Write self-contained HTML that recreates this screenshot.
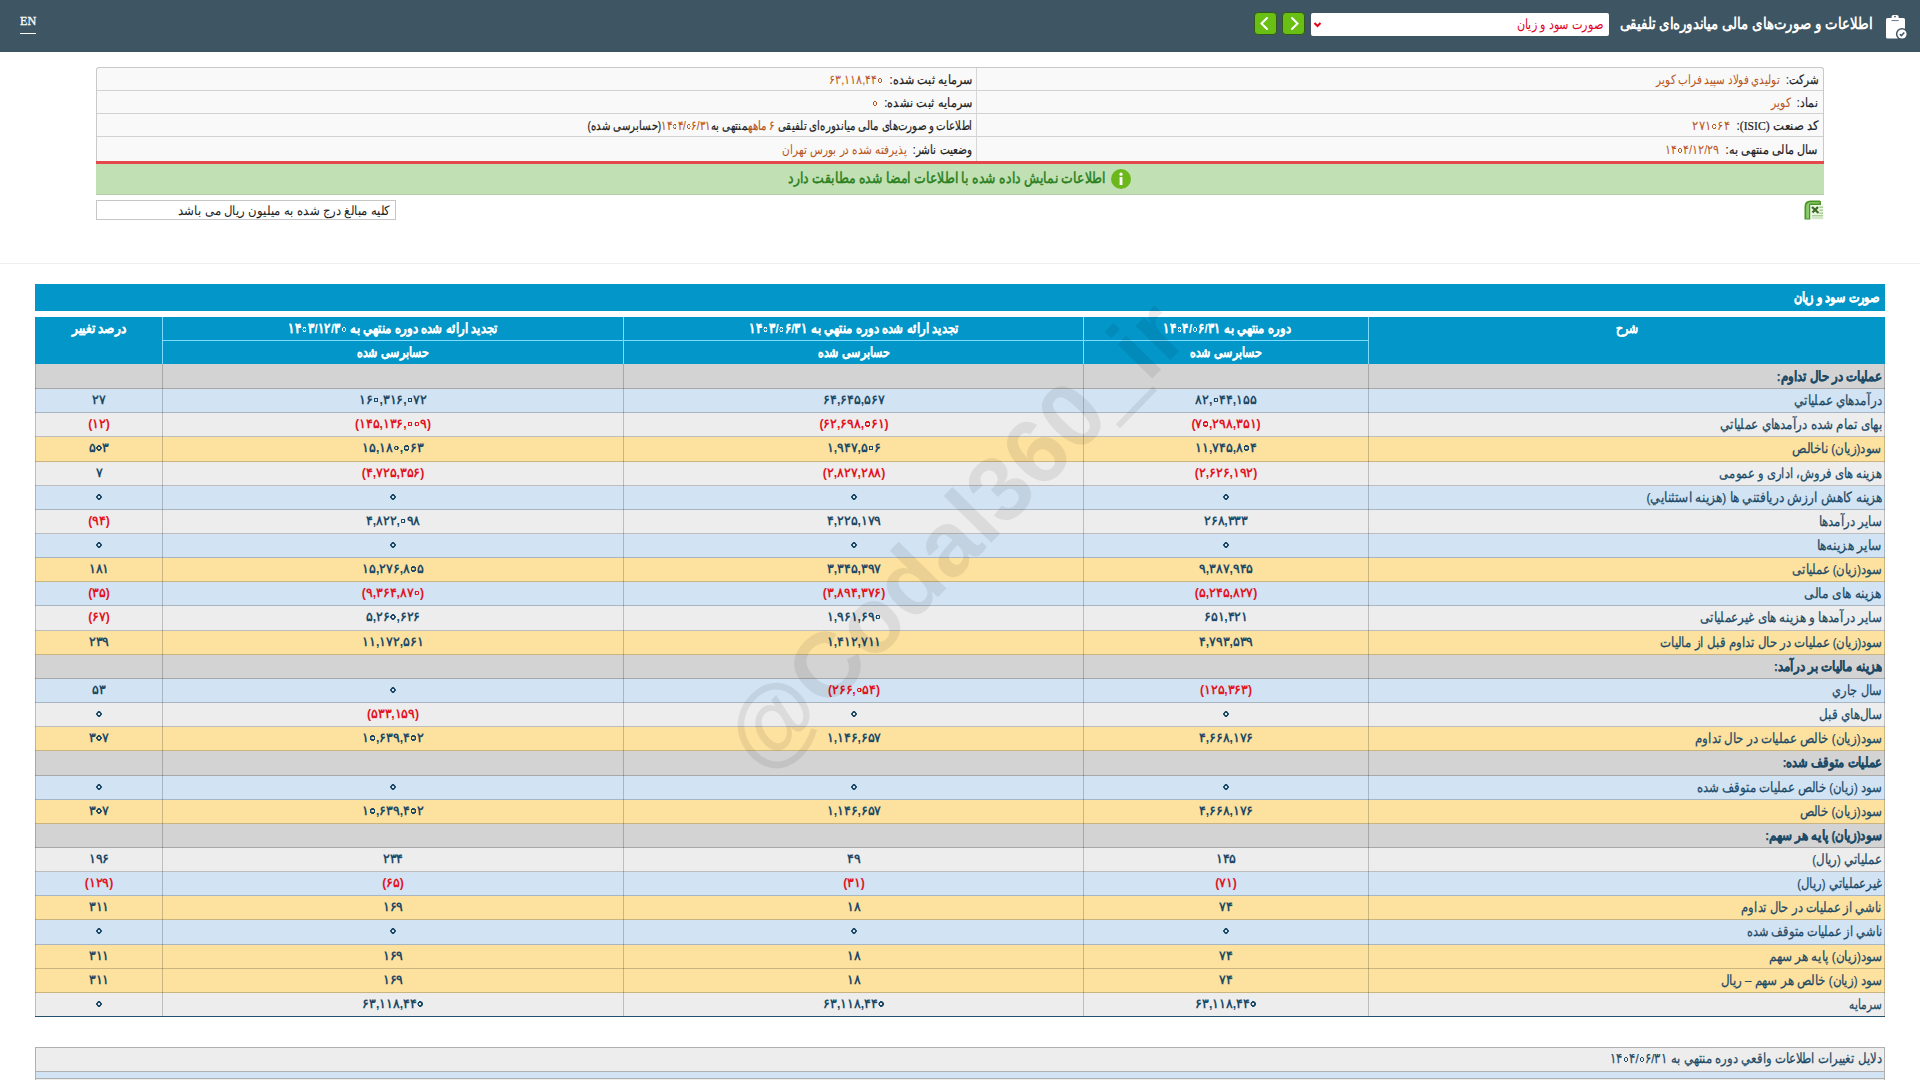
<!DOCTYPE html><html><head><meta charset="utf-8"><style>
*{margin:0;padding:0;box-sizing:border-box}
html,body{width:1920px;height:1080px;overflow:hidden;background:#fff;font-family:"Liberation Sans", sans-serif;}
.a{position:absolute}
.rtl{direction:rtl;unicode-bidi:embed}
.txt{white-space:nowrap;line-height:1}
.lab{color:#222;-webkit-text-stroke:0.2px currentColor}
.val{color:#b8561c}
.num{font-weight:bold;color:#1c4a66;white-space:nowrap;line-height:1;direction:ltr}
.neg{color:#e3141e}
.z{display:inline-block;width:5px;height:5px;background:radial-gradient(circle closest-side,transparent 0,transparent 55%,currentColor 62%,currentColor 92%,transparent 100%);vertical-align:1px;margin:0 1px;font-style:normal}
.num .z{width:5.4px;height:5.4px;background:radial-gradient(circle closest-side,transparent 0,transparent 38%,currentColor 48%,currentColor 90%,transparent 100%);vertical-align:1.2px;margin:0 0.8px}
.desc{color:#1c4a66;white-space:nowrap;line-height:1;direction:rtl;-webkit-text-stroke:0.25px currentColor}
</style></head><body>
<div class="a" style="left:0;top:0;width:1920px;height:52px;background:#3e5563"></div>
<div class="a txt" style="left:20px;top:14px;font-family:'Liberation Serif',serif;font-size:13.5px;color:#fff;transform:scaleX(0.9);transform-origin:left;-webkit-text-stroke:0.3px #fff">EN</div>
<div class="a" style="left:20px;top:33px;width:16px;height:1px;background:#fff"></div>
<svg class="a" style="left:1880px;top:10px" width="32" height="34" viewBox="0 0 32 34">
<rect x="6" y="8" width="19" height="20.5" rx="1.5" fill="#fff"/>
<rect x="11.5" y="4.9" width="7.2" height="5.5" rx="2" fill="#fff"/>
<path d="M11.5 10.6 H18.7" stroke="#3e5563" stroke-width="0.8"/>
<circle cx="15" cy="6.6" r="0.9" fill="#3e5563"/>
<circle cx="22" cy="24" r="6.1" fill="#3e5563"/>
<circle cx="22" cy="24" r="4.6" fill="#fff"/>
<path d="M19.8 24.2 L21.4 25.6 L24.3 22.6" stroke="#3e5563" stroke-width="1.5" fill="none"/>
</svg>
<div id="t0" class="a txt rtl" style="right:47px;top:16px;font-size:15.5px;font-weight:bold;color:#fff;transform:scaleX(0.8307);transform-origin:right;"><span>اطلاعات و صورت‌های مالی میاندوره‌ای تلفیقی</span></div>
<div class="a" style="left:1311px;top:13px;width:298px;height:23px;background:#fff;border-radius:2px"></div>
<div id="t1" class="a txt rtl" style="right:317px;top:18px;font-size:13.5px;color:#e3001b;transform:scaleX(0.8017);transform-origin:right;"><span>صورت سود و زیان</span></div>
<svg class="a" style="left:1312px;top:20px" width="12" height="10" viewBox="0 0 12 10"><path d="M2.5 3 L5.5 6 L8.5 3" stroke="#e3001b" stroke-width="2" fill="none"/></svg>
<div class="a" style="left:1254px;top:12px;width:23px;height:23px;background:#6abf14;border-radius:4px;border:1px solid #2f5a1c"></div>
<svg class="a" style="left:1254px;top:12px" width="23" height="23" viewBox="0 0 23 23"><path d="M13 6 L7.5 11.5 L13 17" stroke="#fff" stroke-width="2" fill="none" stroke-linecap="round"/></svg>
<div class="a" style="left:1282px;top:12px;width:23px;height:23px;background:#6abf14;border-radius:4px;border:1px solid #2f5a1c"></div>
<svg class="a" style="left:1282px;top:12px" width="23" height="23" viewBox="0 0 23 23"><path d="M10 6 L15.5 11.5 L10 17" stroke="#fff" stroke-width="2" fill="none" stroke-linecap="round"/></svg>
<div class="a" style="left:96px;top:67px;width:1728px;height:94px;background:#f9f9fa;border:1px solid #c9c9c9;border-bottom:none;border-radius:3px 3px 0 0"></div>
<div class="a" style="left:97px;top:90px;width:1726px;height:1px;background:#d2d2d2"></div>
<div class="a" style="left:97px;top:113px;width:1726px;height:1px;background:#d2d2d2"></div>
<div class="a" style="left:97px;top:136px;width:1726px;height:1px;background:#d2d2d2"></div>
<div class="a" style="left:976px;top:68px;width:1px;height:93px;background:#d6d6d6"></div>
<div class="a" style="left:96px;top:161px;width:1728px;height:3px;background:#e5484a"></div>
<div class="a" style="left:96px;top:164px;width:1728px;height:31px;background:#c1e1b4;border-bottom:1px solid #b5cfaa"></div>
<div id="t2" class="a txt rtl" style="right:102px;top:73px;font-size:13px;transform:scaleX(0.7968);transform-origin:right;"><span><span class="lab">شرکت:</span>&nbsp;&nbsp;<span class="val">توليدي فولاد سپيد فراب كوير</span></span></div>
<div id="t3" class="a txt rtl" style="right:102px;top:96px;font-size:13px;transform:scaleX(0.8266);transform-origin:right;"><span><span class="lab">نماد:</span>&nbsp;&nbsp;<span class="val">كوير</span></span></div>
<div id="t4" class="a txt rtl" style="right:102px;top:119px;font-size:13px;transform:scaleX(0.8978);transform-origin:right;"><span><span class="lab">کد صنعت <span style="font-family:Liberation Serif,serif">(ISIC)</span>:</span>&nbsp;&nbsp;<span class="val"><span dir="ltr" style="unicode-bidi:isolate">۲۷۱<i class="z"></i>۶۴</span></span></span></div>
<div id="t5" class="a txt rtl" style="right:102px;top:143px;font-size:13px;transform:scaleX(0.8599);transform-origin:right;"><span><span class="lab">سال مالی منتهی به:</span>&nbsp;&nbsp;<span class="val"><span dir="ltr" style="unicode-bidi:isolate">۱۴<i class="z"></i>۴/۱۲/۲۹</span></span></span></div>
<div id="t6" class="a txt rtl" style="right:948px;top:73px;font-size:13px;transform:scaleX(0.8547);transform-origin:right;"><span><span class="lab">سرمایه ثبت شده:</span>&nbsp;&nbsp;<span class="val"><span dir="ltr" style="unicode-bidi:isolate">۶۳,۱۱۸,۴۴<i class="z"></i></span></span></span></div>
<div id="t7" class="a txt rtl" style="right:948px;top:96px;font-size:13px;transform:scaleX(0.8615);transform-origin:right;"><span><span class="lab">سرمایه ثبت نشده:</span>&nbsp;&nbsp;<span class="val"><span dir="ltr" style="unicode-bidi:isolate"><i class="z"></i></span></span></span></div>
<div id="t8" class="a txt rtl" style="right:948px;top:119px;font-size:13px;transform:scaleX(0.7818);transform-origin:right;"><span><span class="lab">اطلاعات و صورت‌های مالی میاندوره‌ای تلفیقی <span class="val"><span dir="ltr" style="unicode-bidi:isolate">۶</span> ماهه</span>منتهی به<span class="val"><span dir="ltr" style="unicode-bidi:isolate">۱۴<i class="z"></i>۴/<i class="z"></i>۶/۳۱</span></span>(حسابرسی شده)</span></span></div>
<div id="t9" class="a txt rtl" style="right:948px;top:143px;font-size:13px;transform:scaleX(0.8088);transform-origin:right;"><span><span class="lab">وضعیت ناشر:</span>&nbsp;&nbsp;<span class="val">پذیرفته شده در بورس تهران</span></span></div>
<div id="t10" class="a txt rtl" style="right:815px;top:171px;font-size:14.5px;color:#2a801c;-webkit-text-stroke:0.5px #2a801c;transform:scaleX(0.8271);transform-origin:right;"><span>اطلاعات نمایش داده شده با اطلاعات امضا شده مطابقت دارد</span></div>
<svg class="a" style="left:1111px;top:169px" width="20" height="20" viewBox="0 0 20 20"><circle cx="10" cy="10" r="10" fill="#6cb81c"/><circle cx="10" cy="5.2" r="1.6" fill="#fff"/><rect x="8.6" y="8" width="2.8" height="8" fill="#fff"/></svg>
<div class="a" style="left:96px;top:200px;width:300px;height:20px;border:1px solid #c6c6c6;background:#fff"></div>
<div id="t11" class="a txt rtl" style="right:1530px;top:204px;font-size:13px;color:#1e1e1e;transform:scaleX(0.9025);transform-origin:right;"><span>کلیه مبالغ درج شده به میلیون ریال می باشد</span></div>
<svg class="a" style="left:1804px;top:200px" width="20" height="20" viewBox="0 0 20 20">
<path d="M0.5 19.5 L0.5 6.5 Q0.5 0.5 6.5 0.5 L15.5 0.5 Q17 0.5 17 2 L17 5 L6.5 5 L6.5 19.5 Z" fill="#4a9429"/>
<path d="M2.2 18.5 L2.2 6.8 Q2.2 2.2 6.8 2.2 L15.5 2.2 L15.5 3.6 L6.5 3.6 Q5 3.6 5 5.2 L5 18.5 Z" fill="#8ccc6c"/>
<rect x="6.5" y="5" width="13" height="14.5" fill="#eaf8e0"/>
<path d="M8 7 L14.5 13 M14 7 L8.5 12.5" stroke="#3b6a28" stroke-width="2.3"/>
<rect x="15.5" y="6.5" width="3.5" height="1.4" fill="#a3c893"/><rect x="15.5" y="9.5" width="3.5" height="1.4" fill="#a3c893"/><rect x="15.5" y="12.5" width="3.5" height="1.4" fill="#a3c893"/>
<rect x="8" y="15" width="11" height="1.4" fill="#a9cc98"/><rect x="8" y="17.4" width="11" height="1.2" fill="#c4dcb8"/>
</svg>
<div class="a" style="left:0;top:263px;width:1920px;height:1px;background:#eeeeee"></div>
<div class="a" style="left:35px;top:284px;width:1850px;height:27px;background:#0397c9"></div>
<div id="t12" class="a txt rtl" style="right:40px;top:290px;font-size:14px;font-weight:bold;color:#fff;-webkit-text-stroke:0.3px #fff;transform:scaleX(0.7987);transform-origin:right;"><span>صورت سود و زیان</span></div>
<div class="a" style="left:35px;top:317px;width:1850px;height:47px;background:#0397c9"></div>
<div class="a" style="left:162px;top:317px;width:1px;height:47px;background:#7fdcff"></div>
<div class="a" style="left:623px;top:317px;width:1px;height:47px;background:#7fdcff"></div>
<div class="a" style="left:1083px;top:317px;width:1px;height:47px;background:#7fdcff"></div>
<div class="a" style="left:1368px;top:317px;width:1px;height:47px;background:#7fdcff"></div>
<div class="a" style="left:163px;top:340px;width:1205px;height:1px;background:#7fdcff"></div>
<div id="t13" class="a txt rtl" style="left:1126.5px;width:1000px;text-align:center;top:322px;font-size:13.5px;font-weight:bold;color:#fff;-webkit-text-stroke:0.12px #fff;transform:scaleX(0.7759);transform-origin:center;"><span>شرح</span></div>
<div id="t14" class="a txt rtl" style="left:726.5px;width:1000px;text-align:center;top:322px;font-size:13.5px;font-weight:bold;color:#fff;-webkit-text-stroke:0.12px #fff;transform:scaleX(0.8258);transform-origin:center;"><span>دوره منتهي به <span dir="ltr" style="unicode-bidi:isolate">۱۴<i class="z"></i>۴/<i class="z"></i>۶/۳۱</span></span></div>
<div id="t15" class="a txt rtl" style="left:353.5px;width:1000px;text-align:center;top:322px;font-size:13.5px;font-weight:bold;color:#fff;-webkit-text-stroke:0.12px #fff;transform:scaleX(0.8392);transform-origin:center;"><span>تجدید ارائه شده دوره منتهي به <span dir="ltr" style="unicode-bidi:isolate">۱۴<i class="z"></i>۳/<i class="z"></i>۶/۳۱</span></span></div>
<div id="t16" class="a txt rtl" style="left:-107.5px;width:1000px;text-align:center;top:322px;font-size:13.5px;font-weight:bold;color:#fff;-webkit-text-stroke:0.12px #fff;transform:scaleX(0.8393);transform-origin:center;"><span>تجدید ارائه شده دوره منتهي به <span dir="ltr" style="unicode-bidi:isolate">۱۴<i class="z"></i>۳/۱۲/۳<i class="z"></i></span></span></div>
<div id="t17" class="a txt rtl" style="left:-401px;width:1000px;text-align:center;top:322px;font-size:13.5px;font-weight:bold;color:#fff;-webkit-text-stroke:0.12px #fff;transform:scaleX(0.8603);transform-origin:center;"><span>درصد تغییر</span></div>
<div id="t18" class="a txt rtl" style="left:726px;width:1000px;text-align:center;top:346px;font-size:13.5px;font-weight:bold;color:#fff;-webkit-text-stroke:0.12px #fff;transform:scaleX(0.7933);transform-origin:center;"><span>حسابرسی شده</span></div>
<div id="t19" class="a txt rtl" style="left:353.5px;width:1000px;text-align:center;top:346px;font-size:13.5px;font-weight:bold;color:#fff;-webkit-text-stroke:0.12px #fff;transform:scaleX(0.7933);transform-origin:center;"><span>حسابرسی شده</span></div>
<div id="t20" class="a txt rtl" style="left:-107px;width:1000px;text-align:center;top:346px;font-size:13.5px;font-weight:bold;color:#fff;-webkit-text-stroke:0.12px #fff;transform:scaleX(0.7933);transform-origin:center;"><span>حسابرسی شده</span></div>
<div class="a" style="left:35px;top:364px;width:1850px;height:24px;background:#d3d3d3"></div>
<div id="t21" class="a desc" style="right:38px;top:370px;font-size:13.5px;font-weight:bold;transform:scaleX(0.8409);transform-origin:right;"><span>عمليات در حال تداوم:</span></div>
<div class="a" style="left:35px;top:388px;width:1850px;height:24px;background:#d2e3f4"></div>
<div class="a" style="left:35px;top:388px;width:1850px;height:1px;background:#a8a8a8"></div>
<div id="t22" class="a desc" style="right:38px;top:394px;font-size:13.5px;transform:scaleX(0.8544);transform-origin:right;"><span>درآمدهاي عملياتي</span></div>
<div id="t23" class="a num" style="left:726px;width:1000px;text-align:center;top:394px;font-size:12.5px;transform:scaleX(0.9700);transform-origin:center;"><span><span dir="ltr" style="unicode-bidi:isolate">۸۲,<i class="z"></i>۴۴,۱۵۵</span></span></div>
<div id="t24" class="a num" style="left:353.5px;width:1000px;text-align:center;top:394px;font-size:12.5px;transform:scaleX(0.9700);transform-origin:center;"><span><span dir="ltr" style="unicode-bidi:isolate">۶۴,۶۴۵,۵۶۷</span></span></div>
<div id="t25" class="a num" style="left:-107.5px;width:1000px;text-align:center;top:394px;font-size:12.5px;transform:scaleX(0.9700);transform-origin:center;"><span><span dir="ltr" style="unicode-bidi:isolate">۱۶<i class="z"></i>,۳۱۶,<i class="z"></i>۷۲</span></span></div>
<div id="t26" class="a num" style="left:-401.5px;width:1000px;text-align:center;top:394px;font-size:12.5px;transform:scaleX(0.9700);transform-origin:center;"><span><span dir="ltr" style="unicode-bidi:isolate">۲۷</span></span></div>
<div class="a" style="left:35px;top:412px;width:1850px;height:24px;background:#ededed"></div>
<div class="a" style="left:35px;top:412px;width:1850px;height:1px;background:#a8b5c3"></div>
<div id="t27" class="a desc" style="right:38px;top:418px;font-size:13.5px;transform:scaleX(0.8531);transform-origin:right;"><span>بهاى تمام شده درآمدهاي عملياتي</span></div>
<div id="t28" class="a num neg" style="left:726px;width:1000px;text-align:center;top:418px;font-size:12.5px;transform:scaleX(0.9700);transform-origin:center;"><span><span dir="ltr" style="unicode-bidi:isolate">(۷<i class="z"></i>,۲۹۸,۳۵۱)</span></span></div>
<div id="t29" class="a num neg" style="left:353.5px;width:1000px;text-align:center;top:418px;font-size:12.5px;transform:scaleX(0.9700);transform-origin:center;"><span><span dir="ltr" style="unicode-bidi:isolate">(۶۲,۶۹۸,<i class="z"></i>۶۱)</span></span></div>
<div id="t30" class="a num neg" style="left:-107.5px;width:1000px;text-align:center;top:418px;font-size:12.5px;transform:scaleX(0.9700);transform-origin:center;"><span><span dir="ltr" style="unicode-bidi:isolate">(۱۴۵,۱۳۶,<i class="z"></i><i class="z"></i>۹)</span></span></div>
<div id="t31" class="a num neg" style="left:-401.5px;width:1000px;text-align:center;top:418px;font-size:12.5px;transform:scaleX(0.9700);transform-origin:center;"><span><span dir="ltr" style="unicode-bidi:isolate">(۱۲)</span></span></div>
<div class="a" style="left:35px;top:436px;width:1850px;height:25px;background:#fde19f"></div>
<div class="a" style="left:35px;top:436px;width:1850px;height:1px;background:#bdbdbd"></div>
<div id="t32" class="a desc" style="right:38px;top:442px;font-size:13.5px;transform:scaleX(0.8544);transform-origin:right;"><span>سود(زيان) ناخالص</span></div>
<div id="t33" class="a num" style="left:726px;width:1000px;text-align:center;top:442px;font-size:12.5px;transform:scaleX(0.9700);transform-origin:center;"><span><span dir="ltr" style="unicode-bidi:isolate">۱۱,۷۴۵,۸<i class="z"></i>۴</span></span></div>
<div id="t34" class="a num" style="left:353.5px;width:1000px;text-align:center;top:442px;font-size:12.5px;transform:scaleX(0.9700);transform-origin:center;"><span><span dir="ltr" style="unicode-bidi:isolate">۱,۹۴۷,۵<i class="z"></i>۶</span></span></div>
<div id="t35" class="a num" style="left:-107.5px;width:1000px;text-align:center;top:442px;font-size:12.5px;transform:scaleX(0.9700);transform-origin:center;"><span><span dir="ltr" style="unicode-bidi:isolate">۱۵,۱۸<i class="z"></i>,<i class="z"></i>۶۳</span></span></div>
<div id="t36" class="a num" style="left:-401.5px;width:1000px;text-align:center;top:442px;font-size:12.5px;transform:scaleX(0.9700);transform-origin:center;"><span><span dir="ltr" style="unicode-bidi:isolate">۵<i class="z"></i>۳</span></span></div>
<div class="a" style="left:35px;top:461px;width:1850px;height:24px;background:#ededed"></div>
<div class="a" style="left:35px;top:461px;width:1850px;height:1px;background:#cab47f"></div>
<div id="t37" class="a desc" style="right:38px;top:467px;font-size:13.5px;transform:scaleX(0.8217);transform-origin:right;"><span>هزينه هاى فروش، ادارى و عمومى</span></div>
<div id="t38" class="a num neg" style="left:726px;width:1000px;text-align:center;top:467px;font-size:12.5px;transform:scaleX(0.9700);transform-origin:center;"><span><span dir="ltr" style="unicode-bidi:isolate">(۲,۶۲۶,۱۹۲)</span></span></div>
<div id="t39" class="a num neg" style="left:353.5px;width:1000px;text-align:center;top:467px;font-size:12.5px;transform:scaleX(0.9700);transform-origin:center;"><span><span dir="ltr" style="unicode-bidi:isolate">(۲,۸۲۷,۲۸۸)</span></span></div>
<div id="t40" class="a num neg" style="left:-107.5px;width:1000px;text-align:center;top:467px;font-size:12.5px;transform:scaleX(0.9700);transform-origin:center;"><span><span dir="ltr" style="unicode-bidi:isolate">(۴,۷۲۵,۳۵۶)</span></span></div>
<div id="t41" class="a num" style="left:-401.5px;width:1000px;text-align:center;top:467px;font-size:12.5px;transform:scaleX(0.9700);transform-origin:center;"><span><span dir="ltr" style="unicode-bidi:isolate">۷</span></span></div>
<div class="a" style="left:35px;top:485px;width:1850px;height:24px;background:#d2e3f4"></div>
<div class="a" style="left:35px;top:485px;width:1850px;height:1px;background:#bdbdbd"></div>
<div id="t42" class="a desc" style="right:38px;top:491px;font-size:13.5px;transform:scaleX(0.8692);transform-origin:right;"><span>هزينه كاهش ارزش دريافتني ها (هزينه استثنايي)</span></div>
<div id="t43" class="a num" style="left:726px;width:1000px;text-align:center;top:491px;font-size:12.5px;transform:scaleX(0.9700);transform-origin:center;"><span><span dir="ltr" style="unicode-bidi:isolate"><i class="z"></i></span></span></div>
<div id="t44" class="a num" style="left:353.5px;width:1000px;text-align:center;top:491px;font-size:12.5px;transform:scaleX(0.9700);transform-origin:center;"><span><span dir="ltr" style="unicode-bidi:isolate"><i class="z"></i></span></span></div>
<div id="t45" class="a num" style="left:-107.5px;width:1000px;text-align:center;top:491px;font-size:12.5px;transform:scaleX(0.9700);transform-origin:center;"><span><span dir="ltr" style="unicode-bidi:isolate"><i class="z"></i></span></span></div>
<div id="t46" class="a num" style="left:-401.5px;width:1000px;text-align:center;top:491px;font-size:12.5px;transform:scaleX(0.9700);transform-origin:center;"><span><span dir="ltr" style="unicode-bidi:isolate"><i class="z"></i></span></span></div>
<div class="a" style="left:35px;top:509px;width:1850px;height:24px;background:#ededed"></div>
<div class="a" style="left:35px;top:509px;width:1850px;height:1px;background:#a8b5c3"></div>
<div id="t47" class="a desc" style="right:38px;top:515px;font-size:13.5px;transform:scaleX(0.8426);transform-origin:right;"><span>ساير درآمدها</span></div>
<div id="t48" class="a num" style="left:726px;width:1000px;text-align:center;top:515px;font-size:12.5px;transform:scaleX(0.9700);transform-origin:center;"><span><span dir="ltr" style="unicode-bidi:isolate">۲۶۸,۳۳۳</span></span></div>
<div id="t49" class="a num" style="left:353.5px;width:1000px;text-align:center;top:515px;font-size:12.5px;transform:scaleX(0.9700);transform-origin:center;"><span><span dir="ltr" style="unicode-bidi:isolate">۴,۲۲۵,۱۷۹</span></span></div>
<div id="t50" class="a num" style="left:-107.5px;width:1000px;text-align:center;top:515px;font-size:12.5px;transform:scaleX(0.9700);transform-origin:center;"><span><span dir="ltr" style="unicode-bidi:isolate">۴,۸۲۲,<i class="z"></i>۹۸</span></span></div>
<div id="t51" class="a num neg" style="left:-401.5px;width:1000px;text-align:center;top:515px;font-size:12.5px;transform:scaleX(0.9700);transform-origin:center;"><span><span dir="ltr" style="unicode-bidi:isolate">(۹۴)</span></span></div>
<div class="a" style="left:35px;top:533px;width:1850px;height:24px;background:#d2e3f4"></div>
<div class="a" style="left:35px;top:533px;width:1850px;height:1px;background:#bdbdbd"></div>
<div id="t52" class="a desc" style="right:38px;top:539px;font-size:13.5px;transform:scaleX(0.8825);transform-origin:right;"><span>ساير هزينه‌ها</span></div>
<div id="t53" class="a num" style="left:726px;width:1000px;text-align:center;top:539px;font-size:12.5px;transform:scaleX(0.9700);transform-origin:center;"><span><span dir="ltr" style="unicode-bidi:isolate"><i class="z"></i></span></span></div>
<div id="t54" class="a num" style="left:353.5px;width:1000px;text-align:center;top:539px;font-size:12.5px;transform:scaleX(0.9700);transform-origin:center;"><span><span dir="ltr" style="unicode-bidi:isolate"><i class="z"></i></span></span></div>
<div id="t55" class="a num" style="left:-107.5px;width:1000px;text-align:center;top:539px;font-size:12.5px;transform:scaleX(0.9700);transform-origin:center;"><span><span dir="ltr" style="unicode-bidi:isolate"><i class="z"></i></span></span></div>
<div id="t56" class="a num" style="left:-401.5px;width:1000px;text-align:center;top:539px;font-size:12.5px;transform:scaleX(0.9700);transform-origin:center;"><span><span dir="ltr" style="unicode-bidi:isolate"><i class="z"></i></span></span></div>
<div class="a" style="left:35px;top:557px;width:1850px;height:24px;background:#fde19f"></div>
<div class="a" style="left:35px;top:557px;width:1850px;height:1px;background:#a8b5c3"></div>
<div id="t57" class="a desc" style="right:38px;top:563px;font-size:13.5px;transform:scaleX(0.8306);transform-origin:right;"><span>سود(زيان) عملياتى</span></div>
<div id="t58" class="a num" style="left:726px;width:1000px;text-align:center;top:563px;font-size:12.5px;transform:scaleX(0.9700);transform-origin:center;"><span><span dir="ltr" style="unicode-bidi:isolate">۹,۳۸۷,۹۴۵</span></span></div>
<div id="t59" class="a num" style="left:353.5px;width:1000px;text-align:center;top:563px;font-size:12.5px;transform:scaleX(0.9700);transform-origin:center;"><span><span dir="ltr" style="unicode-bidi:isolate">۳,۳۴۵,۳۹۷</span></span></div>
<div id="t60" class="a num" style="left:-107.5px;width:1000px;text-align:center;top:563px;font-size:12.5px;transform:scaleX(0.9700);transform-origin:center;"><span><span dir="ltr" style="unicode-bidi:isolate">۱۵,۲۷۶,۸<i class="z"></i>۵</span></span></div>
<div id="t61" class="a num" style="left:-401.5px;width:1000px;text-align:center;top:563px;font-size:12.5px;transform:scaleX(0.9700);transform-origin:center;"><span><span dir="ltr" style="unicode-bidi:isolate">۱۸۱</span></span></div>
<div class="a" style="left:35px;top:581px;width:1850px;height:24px;background:#d2e3f4"></div>
<div class="a" style="left:35px;top:581px;width:1850px;height:1px;background:#cab47f"></div>
<div id="t62" class="a desc" style="right:38px;top:587px;font-size:13.5px;transform:scaleX(0.8710);transform-origin:right;"><span>هزينه هاى مالى</span></div>
<div id="t63" class="a num neg" style="left:726px;width:1000px;text-align:center;top:587px;font-size:12.5px;transform:scaleX(0.9700);transform-origin:center;"><span><span dir="ltr" style="unicode-bidi:isolate">(۵,۲۴۵,۸۲۷)</span></span></div>
<div id="t64" class="a num neg" style="left:353.5px;width:1000px;text-align:center;top:587px;font-size:12.5px;transform:scaleX(0.9700);transform-origin:center;"><span><span dir="ltr" style="unicode-bidi:isolate">(۳,۸۹۴,۳۷۶)</span></span></div>
<div id="t65" class="a num neg" style="left:-107.5px;width:1000px;text-align:center;top:587px;font-size:12.5px;transform:scaleX(0.9700);transform-origin:center;"><span><span dir="ltr" style="unicode-bidi:isolate">(۹,۳۶۴,۸۷<i class="z"></i>)</span></span></div>
<div id="t66" class="a num neg" style="left:-401.5px;width:1000px;text-align:center;top:587px;font-size:12.5px;transform:scaleX(0.9700);transform-origin:center;"><span><span dir="ltr" style="unicode-bidi:isolate">(۳۵)</span></span></div>
<div class="a" style="left:35px;top:605px;width:1850px;height:25px;background:#ededed"></div>
<div class="a" style="left:35px;top:605px;width:1850px;height:1px;background:#a8b5c3"></div>
<div id="t67" class="a desc" style="right:38px;top:611px;font-size:13.5px;transform:scaleX(0.8505);transform-origin:right;"><span>ساير درآمدها و هزينه هاى غيرعملياتى</span></div>
<div id="t68" class="a num" style="left:726px;width:1000px;text-align:center;top:611px;font-size:12.5px;transform:scaleX(0.9700);transform-origin:center;"><span><span dir="ltr" style="unicode-bidi:isolate">۶۵۱,۴۲۱</span></span></div>
<div id="t69" class="a num" style="left:353.5px;width:1000px;text-align:center;top:611px;font-size:12.5px;transform:scaleX(0.9700);transform-origin:center;"><span><span dir="ltr" style="unicode-bidi:isolate">۱,۹۶۱,۶۹<i class="z"></i></span></span></div>
<div id="t70" class="a num" style="left:-107.5px;width:1000px;text-align:center;top:611px;font-size:12.5px;transform:scaleX(0.9700);transform-origin:center;"><span><span dir="ltr" style="unicode-bidi:isolate">۵,۲۶<i class="z"></i>,۶۲۶</span></span></div>
<div id="t71" class="a num neg" style="left:-401.5px;width:1000px;text-align:center;top:611px;font-size:12.5px;transform:scaleX(0.9700);transform-origin:center;"><span><span dir="ltr" style="unicode-bidi:isolate">(۶۷)</span></span></div>
<div class="a" style="left:35px;top:630px;width:1850px;height:24px;background:#fde19f"></div>
<div class="a" style="left:35px;top:630px;width:1850px;height:1px;background:#bdbdbd"></div>
<div id="t72" class="a desc" style="right:38px;top:636px;font-size:13.5px;transform:scaleX(0.8397);transform-origin:right;"><span>سود(زيان) عمليات در حال تداوم قبل از ماليات</span></div>
<div id="t73" class="a num" style="left:726px;width:1000px;text-align:center;top:636px;font-size:12.5px;transform:scaleX(0.9700);transform-origin:center;"><span><span dir="ltr" style="unicode-bidi:isolate">۴,۷۹۳,۵۳۹</span></span></div>
<div id="t74" class="a num" style="left:353.5px;width:1000px;text-align:center;top:636px;font-size:12.5px;transform:scaleX(0.9700);transform-origin:center;"><span><span dir="ltr" style="unicode-bidi:isolate">۱,۴۱۲,۷۱۱</span></span></div>
<div id="t75" class="a num" style="left:-107.5px;width:1000px;text-align:center;top:636px;font-size:12.5px;transform:scaleX(0.9700);transform-origin:center;"><span><span dir="ltr" style="unicode-bidi:isolate">۱۱,۱۷۲,۵۶۱</span></span></div>
<div id="t76" class="a num" style="left:-401.5px;width:1000px;text-align:center;top:636px;font-size:12.5px;transform:scaleX(0.9700);transform-origin:center;"><span><span dir="ltr" style="unicode-bidi:isolate">۲۳۹</span></span></div>
<div class="a" style="left:35px;top:654px;width:1850px;height:24px;background:#d3d3d3"></div>
<div class="a" style="left:35px;top:654px;width:1850px;height:1px;background:#cab47f"></div>
<div id="t77" class="a desc" style="right:38px;top:660px;font-size:13.5px;font-weight:bold;transform:scaleX(0.8438);transform-origin:right;"><span>هزينه ماليات بر درآمد:</span></div>
<div class="a" style="left:35px;top:678px;width:1850px;height:24px;background:#d2e3f4"></div>
<div class="a" style="left:35px;top:678px;width:1850px;height:1px;background:#a8a8a8"></div>
<div id="t78" class="a desc" style="right:38px;top:684px;font-size:13.5px;transform:scaleX(0.8113);transform-origin:right;"><span>سال جاري</span></div>
<div id="t79" class="a num neg" style="left:726px;width:1000px;text-align:center;top:684px;font-size:12.5px;transform:scaleX(0.9700);transform-origin:center;"><span><span dir="ltr" style="unicode-bidi:isolate">(۱۲۵,۳۶۳)</span></span></div>
<div id="t80" class="a num neg" style="left:353.5px;width:1000px;text-align:center;top:684px;font-size:12.5px;transform:scaleX(0.9700);transform-origin:center;"><span><span dir="ltr" style="unicode-bidi:isolate">(۲۶۶,<i class="z"></i>۵۴)</span></span></div>
<div id="t81" class="a num" style="left:-107.5px;width:1000px;text-align:center;top:684px;font-size:12.5px;transform:scaleX(0.9700);transform-origin:center;"><span><span dir="ltr" style="unicode-bidi:isolate"><i class="z"></i></span></span></div>
<div id="t82" class="a num" style="left:-401.5px;width:1000px;text-align:center;top:684px;font-size:12.5px;transform:scaleX(0.9700);transform-origin:center;"><span><span dir="ltr" style="unicode-bidi:isolate">۵۳</span></span></div>
<div class="a" style="left:35px;top:702px;width:1850px;height:24px;background:#ededed"></div>
<div class="a" style="left:35px;top:702px;width:1850px;height:1px;background:#a8b5c3"></div>
<div id="t83" class="a desc" style="right:38px;top:708px;font-size:13.5px;transform:scaleX(0.8541);transform-origin:right;"><span>سال‌هاي قبل</span></div>
<div id="t84" class="a num" style="left:726px;width:1000px;text-align:center;top:708px;font-size:12.5px;transform:scaleX(0.9700);transform-origin:center;"><span><span dir="ltr" style="unicode-bidi:isolate"><i class="z"></i></span></span></div>
<div id="t85" class="a num" style="left:353.5px;width:1000px;text-align:center;top:708px;font-size:12.5px;transform:scaleX(0.9700);transform-origin:center;"><span><span dir="ltr" style="unicode-bidi:isolate"><i class="z"></i></span></span></div>
<div id="t86" class="a num neg" style="left:-107.5px;width:1000px;text-align:center;top:708px;font-size:12.5px;transform:scaleX(0.9700);transform-origin:center;"><span><span dir="ltr" style="unicode-bidi:isolate">(۵۳۳,۱۵۹)</span></span></div>
<div id="t87" class="a num" style="left:-401.5px;width:1000px;text-align:center;top:708px;font-size:12.5px;transform:scaleX(0.9700);transform-origin:center;"><span><span dir="ltr" style="unicode-bidi:isolate"><i class="z"></i></span></span></div>
<div class="a" style="left:35px;top:726px;width:1850px;height:24px;background:#fde19f"></div>
<div class="a" style="left:35px;top:726px;width:1850px;height:1px;background:#bdbdbd"></div>
<div id="t88" class="a desc" style="right:38px;top:732px;font-size:13.5px;transform:scaleX(0.8467);transform-origin:right;"><span>سود(زيان) خالص عمليات در حال تداوم</span></div>
<div id="t89" class="a num" style="left:726px;width:1000px;text-align:center;top:732px;font-size:12.5px;transform:scaleX(0.9700);transform-origin:center;"><span><span dir="ltr" style="unicode-bidi:isolate">۴,۶۶۸,۱۷۶</span></span></div>
<div id="t90" class="a num" style="left:353.5px;width:1000px;text-align:center;top:732px;font-size:12.5px;transform:scaleX(0.9700);transform-origin:center;"><span><span dir="ltr" style="unicode-bidi:isolate">۱,۱۴۶,۶۵۷</span></span></div>
<div id="t91" class="a num" style="left:-107.5px;width:1000px;text-align:center;top:732px;font-size:12.5px;transform:scaleX(0.9700);transform-origin:center;"><span><span dir="ltr" style="unicode-bidi:isolate">۱<i class="z"></i>,۶۳۹,۴<i class="z"></i>۲</span></span></div>
<div id="t92" class="a num" style="left:-401.5px;width:1000px;text-align:center;top:732px;font-size:12.5px;transform:scaleX(0.9700);transform-origin:center;"><span><span dir="ltr" style="unicode-bidi:isolate">۳<i class="z"></i>۷</span></span></div>
<div class="a" style="left:35px;top:750px;width:1850px;height:25px;background:#d3d3d3"></div>
<div class="a" style="left:35px;top:750px;width:1850px;height:1px;background:#cab47f"></div>
<div id="t93" class="a desc" style="right:38px;top:756px;font-size:13.5px;font-weight:bold;transform:scaleX(0.8207);transform-origin:right;"><span>عمليات متوقف شده:</span></div>
<div class="a" style="left:35px;top:775px;width:1850px;height:24px;background:#d2e3f4"></div>
<div class="a" style="left:35px;top:775px;width:1850px;height:1px;background:#a8a8a8"></div>
<div id="t94" class="a desc" style="right:38px;top:781px;font-size:13.5px;transform:scaleX(0.8367);transform-origin:right;"><span>سود (زيان) خالص عمليات متوقف شده</span></div>
<div id="t95" class="a num" style="left:726px;width:1000px;text-align:center;top:781px;font-size:12.5px;transform:scaleX(0.9700);transform-origin:center;"><span><span dir="ltr" style="unicode-bidi:isolate"><i class="z"></i></span></span></div>
<div id="t96" class="a num" style="left:353.5px;width:1000px;text-align:center;top:781px;font-size:12.5px;transform:scaleX(0.9700);transform-origin:center;"><span><span dir="ltr" style="unicode-bidi:isolate"><i class="z"></i></span></span></div>
<div id="t97" class="a num" style="left:-107.5px;width:1000px;text-align:center;top:781px;font-size:12.5px;transform:scaleX(0.9700);transform-origin:center;"><span><span dir="ltr" style="unicode-bidi:isolate"><i class="z"></i></span></span></div>
<div id="t98" class="a num" style="left:-401.5px;width:1000px;text-align:center;top:781px;font-size:12.5px;transform:scaleX(0.9700);transform-origin:center;"><span><span dir="ltr" style="unicode-bidi:isolate"><i class="z"></i></span></span></div>
<div class="a" style="left:35px;top:799px;width:1850px;height:24px;background:#fde19f"></div>
<div class="a" style="left:35px;top:799px;width:1850px;height:1px;background:#a8b5c3"></div>
<div id="t99" class="a desc" style="right:38px;top:805px;font-size:13.5px;transform:scaleX(0.8496);transform-origin:right;"><span>سود(زيان) خالص</span></div>
<div id="t100" class="a num" style="left:726px;width:1000px;text-align:center;top:805px;font-size:12.5px;transform:scaleX(0.9700);transform-origin:center;"><span><span dir="ltr" style="unicode-bidi:isolate">۴,۶۶۸,۱۷۶</span></span></div>
<div id="t101" class="a num" style="left:353.5px;width:1000px;text-align:center;top:805px;font-size:12.5px;transform:scaleX(0.9700);transform-origin:center;"><span><span dir="ltr" style="unicode-bidi:isolate">۱,۱۴۶,۶۵۷</span></span></div>
<div id="t102" class="a num" style="left:-107.5px;width:1000px;text-align:center;top:805px;font-size:12.5px;transform:scaleX(0.9700);transform-origin:center;"><span><span dir="ltr" style="unicode-bidi:isolate">۱<i class="z"></i>,۶۳۹,۴<i class="z"></i>۲</span></span></div>
<div id="t103" class="a num" style="left:-401.5px;width:1000px;text-align:center;top:805px;font-size:12.5px;transform:scaleX(0.9700);transform-origin:center;"><span><span dir="ltr" style="unicode-bidi:isolate">۳<i class="z"></i>۷</span></span></div>
<div class="a" style="left:35px;top:823px;width:1850px;height:24px;background:#d3d3d3"></div>
<div class="a" style="left:35px;top:823px;width:1850px;height:1px;background:#cab47f"></div>
<div id="t104" class="a desc" style="right:38px;top:829px;font-size:13.5px;font-weight:bold;transform:scaleX(0.8512);transform-origin:right;"><span>سود(زيان) پايه هر سهم:</span></div>
<div class="a" style="left:35px;top:847px;width:1850px;height:24px;background:#ededed"></div>
<div class="a" style="left:35px;top:847px;width:1850px;height:1px;background:#a8a8a8"></div>
<div id="t105" class="a desc" style="right:38px;top:853px;font-size:13.5px;transform:scaleX(0.8387);transform-origin:right;"><span>عملياتي (ريال)</span></div>
<div id="t106" class="a num" style="left:726px;width:1000px;text-align:center;top:853px;font-size:12.5px;transform:scaleX(0.9700);transform-origin:center;"><span><span dir="ltr" style="unicode-bidi:isolate">۱۴۵</span></span></div>
<div id="t107" class="a num" style="left:353.5px;width:1000px;text-align:center;top:853px;font-size:12.5px;transform:scaleX(0.9700);transform-origin:center;"><span><span dir="ltr" style="unicode-bidi:isolate">۴۹</span></span></div>
<div id="t108" class="a num" style="left:-107.5px;width:1000px;text-align:center;top:853px;font-size:12.5px;transform:scaleX(0.9700);transform-origin:center;"><span><span dir="ltr" style="unicode-bidi:isolate">۲۳۴</span></span></div>
<div id="t109" class="a num" style="left:-401.5px;width:1000px;text-align:center;top:853px;font-size:12.5px;transform:scaleX(0.9700);transform-origin:center;"><span><span dir="ltr" style="unicode-bidi:isolate">۱۹۶</span></span></div>
<div class="a" style="left:35px;top:871px;width:1850px;height:24px;background:#d2e3f4"></div>
<div class="a" style="left:35px;top:871px;width:1850px;height:1px;background:#bdbdbd"></div>
<div id="t110" class="a desc" style="right:38px;top:877px;font-size:13.5px;transform:scaleX(0.8295);transform-origin:right;"><span>غيرعملياتي (ريال)</span></div>
<div id="t111" class="a num neg" style="left:726px;width:1000px;text-align:center;top:877px;font-size:12.5px;transform:scaleX(0.9700);transform-origin:center;"><span><span dir="ltr" style="unicode-bidi:isolate">(۷۱)</span></span></div>
<div id="t112" class="a num neg" style="left:353.5px;width:1000px;text-align:center;top:877px;font-size:12.5px;transform:scaleX(0.9700);transform-origin:center;"><span><span dir="ltr" style="unicode-bidi:isolate">(۳۱)</span></span></div>
<div id="t113" class="a num neg" style="left:-107.5px;width:1000px;text-align:center;top:877px;font-size:12.5px;transform:scaleX(0.9700);transform-origin:center;"><span><span dir="ltr" style="unicode-bidi:isolate">(۶۵)</span></span></div>
<div id="t114" class="a num neg" style="left:-401.5px;width:1000px;text-align:center;top:877px;font-size:12.5px;transform:scaleX(0.9700);transform-origin:center;"><span><span dir="ltr" style="unicode-bidi:isolate">(۱۲۹)</span></span></div>
<div class="a" style="left:35px;top:895px;width:1850px;height:24px;background:#fde19f"></div>
<div class="a" style="left:35px;top:895px;width:1850px;height:1px;background:#a8b5c3"></div>
<div id="t115" class="a desc" style="right:38px;top:901px;font-size:13.5px;transform:scaleX(0.8239);transform-origin:right;"><span>ناشي از عمليات در حال تداوم</span></div>
<div id="t116" class="a num" style="left:726px;width:1000px;text-align:center;top:901px;font-size:12.5px;transform:scaleX(0.9700);transform-origin:center;"><span><span dir="ltr" style="unicode-bidi:isolate">۷۴</span></span></div>
<div id="t117" class="a num" style="left:353.5px;width:1000px;text-align:center;top:901px;font-size:12.5px;transform:scaleX(0.9700);transform-origin:center;"><span><span dir="ltr" style="unicode-bidi:isolate">۱۸</span></span></div>
<div id="t118" class="a num" style="left:-107.5px;width:1000px;text-align:center;top:901px;font-size:12.5px;transform:scaleX(0.9700);transform-origin:center;"><span><span dir="ltr" style="unicode-bidi:isolate">۱۶۹</span></span></div>
<div id="t119" class="a num" style="left:-401.5px;width:1000px;text-align:center;top:901px;font-size:12.5px;transform:scaleX(0.9700);transform-origin:center;"><span><span dir="ltr" style="unicode-bidi:isolate">۳۱۱</span></span></div>
<div class="a" style="left:35px;top:919px;width:1850px;height:25px;background:#d2e3f4"></div>
<div class="a" style="left:35px;top:919px;width:1850px;height:1px;background:#cab47f"></div>
<div id="t120" class="a desc" style="right:38px;top:925px;font-size:13.5px;transform:scaleX(0.8071);transform-origin:right;"><span>ناشي از عمليات متوقف شده</span></div>
<div id="t121" class="a num" style="left:726px;width:1000px;text-align:center;top:925px;font-size:12.5px;transform:scaleX(0.9700);transform-origin:center;"><span><span dir="ltr" style="unicode-bidi:isolate"><i class="z"></i></span></span></div>
<div id="t122" class="a num" style="left:353.5px;width:1000px;text-align:center;top:925px;font-size:12.5px;transform:scaleX(0.9700);transform-origin:center;"><span><span dir="ltr" style="unicode-bidi:isolate"><i class="z"></i></span></span></div>
<div id="t123" class="a num" style="left:-107.5px;width:1000px;text-align:center;top:925px;font-size:12.5px;transform:scaleX(0.9700);transform-origin:center;"><span><span dir="ltr" style="unicode-bidi:isolate"><i class="z"></i></span></span></div>
<div id="t124" class="a num" style="left:-401.5px;width:1000px;text-align:center;top:925px;font-size:12.5px;transform:scaleX(0.9700);transform-origin:center;"><span><span dir="ltr" style="unicode-bidi:isolate"><i class="z"></i></span></span></div>
<div class="a" style="left:35px;top:944px;width:1850px;height:24px;background:#fde19f"></div>
<div class="a" style="left:35px;top:944px;width:1850px;height:1px;background:#a8b5c3"></div>
<div id="t125" class="a desc" style="right:38px;top:950px;font-size:13.5px;transform:scaleX(0.8575);transform-origin:right;"><span>سود(زيان) پايه هر سهم</span></div>
<div id="t126" class="a num" style="left:726px;width:1000px;text-align:center;top:950px;font-size:12.5px;transform:scaleX(0.9700);transform-origin:center;"><span><span dir="ltr" style="unicode-bidi:isolate">۷۴</span></span></div>
<div id="t127" class="a num" style="left:353.5px;width:1000px;text-align:center;top:950px;font-size:12.5px;transform:scaleX(0.9700);transform-origin:center;"><span><span dir="ltr" style="unicode-bidi:isolate">۱۸</span></span></div>
<div id="t128" class="a num" style="left:-107.5px;width:1000px;text-align:center;top:950px;font-size:12.5px;transform:scaleX(0.9700);transform-origin:center;"><span><span dir="ltr" style="unicode-bidi:isolate">۱۶۹</span></span></div>
<div id="t129" class="a num" style="left:-401.5px;width:1000px;text-align:center;top:950px;font-size:12.5px;transform:scaleX(0.9700);transform-origin:center;"><span><span dir="ltr" style="unicode-bidi:isolate">۳۱۱</span></span></div>
<div class="a" style="left:35px;top:968px;width:1850px;height:24px;background:#fde19f"></div>
<div class="a" style="left:35px;top:968px;width:1850px;height:1px;background:#cab47f"></div>
<div id="t130" class="a desc" style="right:38px;top:974px;font-size:13.5px;transform:scaleX(0.8489);transform-origin:right;"><span>سود (زيان) خالص هر سهم – ريال</span></div>
<div id="t131" class="a num" style="left:726px;width:1000px;text-align:center;top:974px;font-size:12.5px;transform:scaleX(0.9700);transform-origin:center;"><span><span dir="ltr" style="unicode-bidi:isolate">۷۴</span></span></div>
<div id="t132" class="a num" style="left:353.5px;width:1000px;text-align:center;top:974px;font-size:12.5px;transform:scaleX(0.9700);transform-origin:center;"><span><span dir="ltr" style="unicode-bidi:isolate">۱۸</span></span></div>
<div id="t133" class="a num" style="left:-107.5px;width:1000px;text-align:center;top:974px;font-size:12.5px;transform:scaleX(0.9700);transform-origin:center;"><span><span dir="ltr" style="unicode-bidi:isolate">۱۶۹</span></span></div>
<div id="t134" class="a num" style="left:-401.5px;width:1000px;text-align:center;top:974px;font-size:12.5px;transform:scaleX(0.9700);transform-origin:center;"><span><span dir="ltr" style="unicode-bidi:isolate">۳۱۱</span></span></div>
<div class="a" style="left:35px;top:992px;width:1850px;height:24px;background:#ededed"></div>
<div class="a" style="left:35px;top:992px;width:1850px;height:1px;background:#cab47f"></div>
<div id="t135" class="a desc" style="right:38px;top:998px;font-size:13.5px;transform:scaleX(0.7523);transform-origin:right;"><span>سرمايه</span></div>
<div id="t136" class="a num" style="left:726px;width:1000px;text-align:center;top:998px;font-size:12.5px;transform:scaleX(0.9700);transform-origin:center;"><span><span dir="ltr" style="unicode-bidi:isolate">۶۳,۱۱۸,۴۴<i class="z"></i></span></span></div>
<div id="t137" class="a num" style="left:353.5px;width:1000px;text-align:center;top:998px;font-size:12.5px;transform:scaleX(0.9700);transform-origin:center;"><span><span dir="ltr" style="unicode-bidi:isolate">۶۳,۱۱۸,۴۴<i class="z"></i></span></span></div>
<div id="t138" class="a num" style="left:-107.5px;width:1000px;text-align:center;top:998px;font-size:12.5px;transform:scaleX(0.9700);transform-origin:center;"><span><span dir="ltr" style="unicode-bidi:isolate">۶۳,۱۱۸,۴۴<i class="z"></i></span></span></div>
<div id="t139" class="a num" style="left:-401.5px;width:1000px;text-align:center;top:998px;font-size:12.5px;transform:scaleX(0.9700);transform-origin:center;"><span><span dir="ltr" style="unicode-bidi:isolate"><i class="z"></i></span></span></div>
<div class="a" style="left:35px;top:1016px;width:1850px;height:1px;background:#24506e"></div>
<div class="a" style="left:35px;top:364px;width:1px;height:652px;background:rgba(0,0,0,0.2)"></div>
<div class="a" style="left:162px;top:364px;width:1px;height:652px;background:rgba(0,0,0,0.2)"></div>
<div class="a" style="left:623px;top:364px;width:1px;height:652px;background:rgba(0,0,0,0.2)"></div>
<div class="a" style="left:1083px;top:364px;width:1px;height:652px;background:rgba(0,0,0,0.2)"></div>
<div class="a" style="left:1368px;top:364px;width:1px;height:652px;background:rgba(0,0,0,0.2)"></div>
<div class="a" style="left:1884px;top:364px;width:1px;height:652px;background:rgba(0,0,0,0.2)"></div>
<div class="a" style="left:35px;top:1047px;width:1850px;height:40px;background:#ededed;border:1px solid #b0b0b0"></div>
<div class="a" style="left:36px;top:1071px;width:1848px;height:1px;background:#b0b0b0"></div>
<div class="a" style="left:36px;top:1072px;width:1848px;height:6px;background:#d2e3f4"></div>
<div class="a" style="left:36px;top:1078px;width:1848px;height:1px;background:#b0b0b0"></div>
<div id="t140" class="a desc" style="right:38px;top:1052px;font-size:13.5px;transform:scaleX(0.8323);transform-origin:right;"><span>دلایل تغییرات اطلاعات واقعي دوره منتهي به <span dir="ltr" style="unicode-bidi:isolate">۱۴<i class="z"></i>۴/<i class="z"></i>۶/۳۱</span></span></div>
<div class="a" style="left:953.5px;top:534.7px;width:0;height:0"><div style="position:absolute;left:0;top:0;transform:translate(-50%,-50%) rotate(-45.6deg);font-size:92px;font-weight:bold;color:rgba(0,0,0,0.075);white-space:nowrap;line-height:1">@Codal360<span style="display:inline-block;width:0.575em;height:0.066em;background:currentColor;vertical-align:-0.13em;margin:0 -0.01em"></span>ir</div></div>
</body></html>
